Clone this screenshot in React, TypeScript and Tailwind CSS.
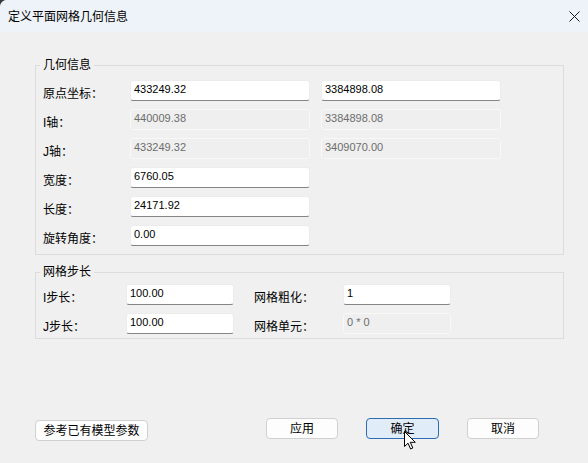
const cjk = "font-['Liberation_Sans','Noto_Sans_CJK_SC',sans-serif]";
const num = "font-['Liberation_Sans',sans-serif]";

function Field({ value, disabled, w }: { value: string; disabled?: boolean; w: string }) {
  return (
    <div
      className={
        disabled
          ? `${w} h-[21px] flex items-center pl-[3px] pb-[2px] rounded-[3px] bg-[#efefef] border border-[#f8f8f8] text-[11px] text-[#6d6d6d] ${num}`
          : `${w} h-[21px] flex items-center pl-[3px] pb-[2px] rounded-[3px] bg-white border border-[#ececec] border-b-[#858585] text-[11px] text-black ${num}`
      }
    >
      {value}
    </div>
  );
}

function Label({ text, w }: { text: string; w: string }) {
  return <div className={`${w} pt-[6px] text-[12px] leading-[14px] text-black ${cjk}`}>{text}</div>;
}

function Btn({ text, w, active }: { text: string; w: string; active?: boolean }) {
  return (
    <div
      className={
        active
          ? `${w} h-[21px] flex items-center justify-center rounded-[4px] border border-[#2b6cb3] bg-[#e0ecf8] text-[12px] text-black ${cjk}`
          : `${w} h-[21px] flex items-center justify-center rounded-[4px] border border-[#d0d0d0] bg-[#fdfdfd] text-[12px] text-black ${cjk}`
      }
    >
      {text}
    </div>
  );
}

export default function App() {
  return (
    <div className="w-[588px] h-[463px] bg-[#3a3a3a] overflow-hidden">
      <div className="relative w-[588px] h-[463px] bg-[#f0f0f0] rounded-tl-[7px] overflow-hidden">
        {/* title bar */}
        <div className="h-[32px] bg-[#eef3f9] flex items-center justify-between pl-[8px] pr-[8px]">
          <span className={`pt-[1px] text-[12px] text-black ${cjk}`}>定义平面网格几何信息</span>
          <svg width="11" height="11" viewBox="0 0 11 11">
            <path d="M0.5 0.5 L10.5 10.5 M10.5 0.5 L0.5 10.5" stroke="#1a1a1a" strokeWidth="1" />
          </svg>
        </div>

        <div className="pt-[26px]">
          <fieldset className="ml-[35px] w-[529px] border border-[#dcdcdc] px-[4px] pb-[8px]">
            <legend className={`px-[3px] text-[12px] leading-[14px] text-black ${cjk}`}>几何信息</legend>
            <div className="pl-[3px] pt-[8px] flex flex-col gap-[8px]">
              <div className="flex items-center">
                <Label text="原点坐标：" w="w-[87px]" />
                <Field value="433249.32" w="w-[180px]" />
                <div className="w-[11px]" />
                <Field value="3384898.08" w="w-[180px]" />
              </div>
              <div className="flex items-center">
                <Label text="I轴：" w="w-[87px]" />
                <Field value="440009.38" w="w-[180px]" disabled />
                <div className="w-[11px]" />
                <Field value="3384898.08" w="w-[180px]" disabled />
              </div>
              <div className="flex items-center">
                <Label text="J轴：" w="w-[87px]" />
                <Field value="433249.32" w="w-[180px]" disabled />
                <div className="w-[11px]" />
                <Field value="3409070.00" w="w-[180px]" disabled />
              </div>
              <div className="flex items-center">
                <Label text="宽度：" w="w-[87px]" />
                <Field value="6760.05" w="w-[180px]" />
              </div>
              <div className="flex items-center">
                <Label text="长度：" w="w-[87px]" />
                <Field value="24171.92" w="w-[180px]" />
              </div>
              <div className="flex items-center">
                <Label text="旋转角度：" w="w-[87px]" />
                <Field value="0.00" w="w-[180px]" />
              </div>
            </div>
          </fieldset>

          <fieldset className="mt-[10px] ml-[35px] w-[529px] border border-[#dcdcdc] px-[4px] pb-[4px]">
            <legend className={`px-[3px] text-[12px] leading-[14px] text-black ${cjk}`}>网格步长</legend>
            <div className="pl-[3px] pt-[5px] flex flex-col gap-[8px]">
              <div className="flex items-center">
                <Label text="I步长：" w="w-[83px]" />
                <Field value="100.00" w="w-[108px]" />
                <div className="w-[20px]" />
                <Label text="网格粗化：" w="w-[89px]" />
                <Field value="1" w="w-[108px]" />
              </div>
              <div className="flex items-center">
                <Label text="J步长：" w="w-[83px]" />
                <Field value="100.00" w="w-[108px]" />
                <div className="w-[20px]" />
                <Label text="网格单元：" w="w-[89px]" />
                <Field value="0 * 0" w="w-[108px]" disabled />
              </div>
            </div>
          </fieldset>

          <div className="mt-[79px] ml-[35px] flex items-start">
            <div className="mt-[2px]">
              <Btn text="参考已有模型参数" w="w-[113px]" />
            </div>
            <div className="ml-[118px] flex gap-[28px]">
              <Btn text="应用" w="w-[72px]" />
              <Btn text="确定" w="w-[73px]" active />
              <Btn text="取消" w="w-[72px]" />
            </div>
          </div>
        </div>

        {/* mouse cursor */}
        <svg className="absolute left-[404px] top-[431px]" width="13" height="19" viewBox="0 0 13 19">
          <path
            d="M0.5 0.5 L0.5 15.5 L4 12.2 L6.6 18 L8.8 17 L6.3 11.3 L11.3 11.3 Z"
            fill="#ffffff"
            stroke="#000000"
            strokeWidth="1"
            strokeLinejoin="round"
          />
        </svg>
      </div>
    </div>
  );
}
